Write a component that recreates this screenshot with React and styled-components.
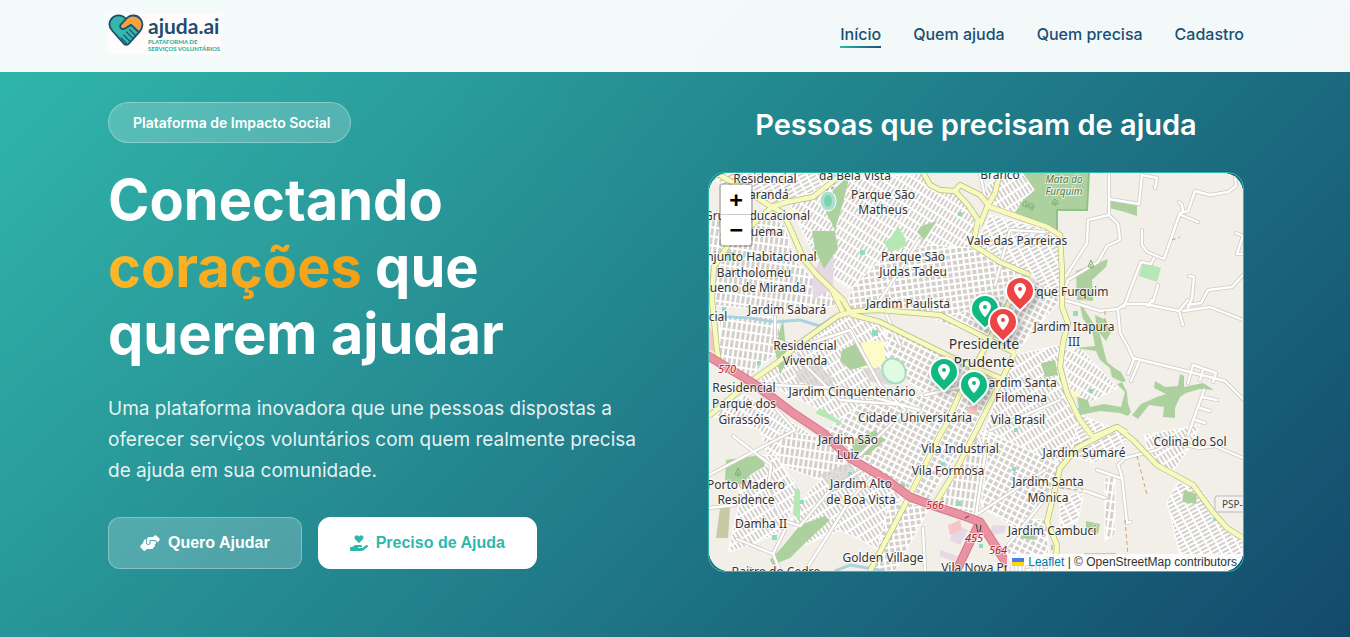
import React from "react";
import styled, { createGlobalStyle } from "styled-components";
import { FaHandshakeAngle, FaHandHoldingHeart, FaLocationDot } from "react-icons/fa6";

const GlobalStyle = createGlobalStyle`
  *, *::before, *::after { box-sizing: border-box; }
  body { margin: 0; font-family: Inter, "Liberation Sans", sans-serif; }
`;

const Page = styled.div`
  min-height: 100vh;
  color: #fff;
  background:
    radial-gradient(circle at 20% 50%, rgba(255, 255, 255, 0.02), transparent 50%),
    linear-gradient(135deg, #2fb9ac 0%, #134a6c 100%);
`;

const Container = styled.div`
  max-width: 1200px;
  margin: 0 auto;
  padding: 0 31px 0 33px;
`;

const Header = styled.header`
  padding-bottom: 4px;
  background: rgba(255, 255, 255, 0.95);
`;

const HeaderRow = styled(Container)`
  display: flex;
  align-items: center;
  justify-content: space-between;
  height: 68px;
`;

const LogoLink = styled.a`
  display: block;
  height: 40px;
  svg { display: block; }
`;

const Nav = styled.nav`
  display: flex;
  gap: 32px;
`;

const NavLink = styled.a`
  padding: 4px 0 2px;
  font-size: 16px;
  font-weight: 500;
  line-height: 20px;
  color: #1b4f72;
  text-decoration: none;
  border-bottom: 2px solid transparent;
  border-image: ${(p) => (p.$active ? "linear-gradient(90deg, #2eb8ac, #1b4f72) 1" : "none")};
`;

const Hero = styled(Container)`
  display: grid;
  grid-template-columns: repeat(2, minmax(0, 1fr));
  gap: 64px;
  padding-top: 30px;
  padding-bottom: 65px;
  @media (max-width: 900px) { grid-template-columns: minmax(0, 1fr); }
`;

const Intro = styled.section`
  display: flex;
  flex-direction: column;
  align-items: flex-start;
`;

const Badge = styled.span`
  padding: 8px 20px 8px 24px;
  border: 1px solid rgba(255, 255, 255, 0.3);
  border-radius: 50px;
  background: rgba(255, 255, 255, 0.2);
  font-size: 14px;
  font-weight: 600;
  line-height: 23px;
`;

const Title = styled.h1`
  margin: 24px 0 25px;
  font-size: 56px;
  font-weight: 700;
  line-height: 67px;
`;

const Highlight = styled.span`
  color: transparent;
  background: linear-gradient(135deg, #fdbb2d, #f39c12);
  background-clip: text;
`;

const Lead = styled.p`
  margin: 0 0 31px;
  font-size: 19px;
  line-height: 31px;
  color: rgba(255, 255, 255, 0.9);
`;

const Actions = styled.div`
  display: flex;
  flex-wrap: wrap;
  gap: 16px;
`;

const Button = styled.button`
  display: inline-flex;
  align-items: center;
  gap: 8px;
  height: 52px;
  padding: 0 31px;
  border: 1px solid ${(p) => (p.$solid ? "#fff" : "rgba(255, 255, 255, 0.3)")};
  border-radius: 12px;
  background: ${(p) => (p.$solid ? "#fff" : "rgba(255, 255, 255, 0.2)")};
  color: ${(p) => (p.$solid ? "#2eb8ac" : "#fff")};
  font-family: "Liberation Sans", Arial, sans-serif;
  font-size: 16px;
  font-weight: 600;
  cursor: pointer;
  svg { flex: none; width: ${(p) => (p.$solid ? 18 : 20)}px; height: 16px; }
`;

const MapSection = styled.section`
  display: flex;
  flex-direction: column;
`;

const MapTitle = styled.h2`
  margin: 0 0 24px;
  font-size: 29px;
  font-weight: 600;
  line-height: 46px;
  text-align: center;
`;

const MapFrame = styled.div`
  height: 400px;
  border: 1px solid #2eb8ac;
  border-radius: 16px;
`;

const MapView = styled.div`
  position: relative;
  height: 100%;
  overflow: hidden;
  border-radius: 20px;
  background: #f2efe9;
`;

const Tiles = styled.svg`
  display: block;
  width: 100%;
  height: 100%;
`;

const ZoomControl = styled.div`
  position: absolute;
  top: 10px;
  left: 10px;
  border: 2px solid rgba(0, 0, 0, 0.2);
  border-radius: 4px;
  background-clip: padding-box;
`;

const ZoomButton = styled.button`
  display: block;
  width: 30px;
  height: 30px;
  padding: 0;
  border: 0;
  border-bottom: ${(p) => (p.$last ? "0" : "1px solid #ccc")};
  border-radius: ${(p) => (p.$last ? "0 0 2px 2px" : "2px 2px 0 0")};
  background: #fff;
  color: #000;
  font: bold 22px/30px "DejaVu Sans Mono", monospace;
  cursor: pointer;
`;

const Pin = styled.div`
  position: absolute;
  left: calc(50% + ${(p) => p.$x}px);
  top: ${(p) => p.$y}px;
  width: 30px;
  height: 30px;
  margin: -15px 0 0 -15px;
  display: flex;
  align-items: center;
  justify-content: center;
  border: 2px solid #fff;
  border-radius: 50% 50% 50% 0;
  background: ${(p) => p.$color};
  box-shadow: 0 4px 8px rgba(0, 0, 0, 0.3);
  transform: rotate(-45deg);
  svg { width: 14px; height: 16px; transform: rotate(45deg); color: #fff; }
`;

const Attribution = styled.div`
  position: absolute;
  right: 0;
  bottom: 0;
  padding: 0 6px 0 5px;
  background: rgba(255, 255, 255, 0.8);
  color: #333;
  font: 12px/17px "Liberation Sans", Arial, sans-serif;
  a { color: #0078a8; text-decoration: none; }
  svg { margin-right: 4px; }
`;

const Logo = () => (
  <svg width="113" height="40" viewBox="0 0 113 40" role="img" aria-label="ajuda.ai">
    <rect width="113" height="40" fill="#fffcfb" />
    <path d="M18 5C14 .2 7 .4 3.600 4.600C.3 8.800 1.200 13.500 4.500 17L16 29.800Q18.300 32 20.600 29.800L31.500 17.800C35 13.800 35.500 8.500 32.200 4.600C28.800 .5 22 .3 18 5Z" fill="#35b8aa" />
    <path d="M18 5C22 .3 28.800 .5 32.200 4.600C35.500 8.500 35 13.500 31.500 17.200L23.500 9.800C20 12.500 16 16 12.800 13.500C12 12 13 10.500 18 5Z" fill="#f9a03a" />
    <g fill="none" stroke="#1c4f71" strokeLinecap="round" strokeLinejoin="round">
      <path d="M18 5C14 .2 7 .4 3.600 4.600C.3 8.800 1.200 13.500 4.500 17L16 29.800Q18.300 32 20.600 29.800L31.500 17.800C35 13.800 35.500 8.500 32.200 4.600C28.800 .5 22 .3 18 5L12.600 10.800C11 13.500 14 16 17 14.500L23 10.800L30.500 18" strokeWidth="1.800" />
      <path d="M21.500 15.500L27.500 21.500M18.500 18L24.500 24.200M15.800 21L21.500 27M13.200 24L18.500 29.500" strokeWidth="1.200" />
    </g>
    <text x="40" y="20" fontFamily="Lato, sans-serif" fontSize="21" fontWeight="700" fill="#1c4f71">ajuda.ai</text>
    <g fontFamily="Lato, sans-serif" fontSize="6" fontWeight="900" fill="#2fb3a4">
      <text x="40" y="30">PLATAFORMA DE</text>
      <text x="40" y="37">SERVIÇOS VOLUNTÁRIOS</text>
    </g>
  </svg>
);

const streetPatterns = [
  ["g1", 8, 5, 9], ["g2", 27, 6, 6], ["g3", -32, 4, 10], ["g4", 62, 4, 9],
  ["g5", -8, 6, 6], ["g6", 32, 4, 9],
];

const blocks = [
  ["g1", "709,215 740,225 765,215 785,225 795,260 825,290 838,305 790,312 709,305"],
  ["g4", "709,173 840,173 812,193 772,204 709,178"],
  ["g6", "790,205 848,180 925,173 932,190 900,235 850,290 820,268"],
  ["g6", "925,188 958,192 978,222 968,248 930,245 880,270 850,290 890,240"],
  ["g5", "850,290 880,260 930,245 972,248 1028,277 1020,300 978,330 935,313 848,310"],
  ["g1", "720,315 775,317 785,345 748,378 719,362"],
  ["g3", "790,350 840,315 880,323 895,355 870,380 905,410 850,425 790,395 760,380"],
  ["g2", "885,325 960,362 1000,378 975,430 928,500 860,460 825,430 860,405 925,395 890,365"],
  ["g2", "935,320 980,336 1015,354 1060,300 1040,280 1012,297"],
  ["g3", "980,195 998,173 1040,173 1028,200 1012,212 990,206"],
  ["g4", "990,215 1050,230 1060,250 1060,300 1030,275 976,245"],
  ["g3", "1015,355 1060,345 1058,370 1072,404 1090,437 1060,465 985,430 1003,380"],
  ["g2", "982,430 1060,465 1052,490 1020,530 985,510 975,480 965,470"],
  ["g1", "937,505 975,435 990,435 980,515"],
  ["g6", "1062,350 1080,348 1118,388 1090,402 1070,390"],
  ["g4", "1080,415 1118,430 1128,440 1095,463 1070,456"],
  ["g6", "709,415 745,395 780,415 820,440 770,462 760,430 730,420"],
  ["g3", "735,458 775,455 800,490 783,530 752,545 728,552 740,500"],
  ["g3", "810,490 850,455 905,497 880,550 840,530 805,545 790,520"],
  ["g1", "780,430 835,440 850,470 820,480 780,465"],
  ["g4", "1167,502 1178,482 1202,490 1220,516 1243,540 1243,571 1184,571"],
  ["g1", "1105,478 1115,476 1115,535 1105,540"],
  ["g3", "1144,435 1200,425 1188,450 1170,475 1150,460"],
  ["g4", "1060,500 1084,490 1078,520 1060,530"],
  ["g5", "890,500 930,507 895,571 872,571"],
  ["g2", "1021,519 1046,520 1050,571 1000,555"],
];

const greens = [
  "1022,172 1089,172 1087,210 1056,210 1057,234 1046,227 1013,216 1023,200 1035,190",
  "1109,199 1137,206 1137,216 1125,212 1109,208",
  "1076,271 1108,259 1106,267 1092,280 1093,301 1077,300",
  "833,190 850,175 843,203 835,230 826,212",
  "812,231 835,231 838,248 824,269 815,250",
  "917,232 921,226 937,221 924,240",
  "1079,301 1083,319 1092,330 1095,346 1075,348 1096,351 1100,360 1110,368 1112,377 1122,382 1127,392 1128,404 1131,412 1128,416 1120,413 1100,411 1080,415 1077,397 1088,400 1090,407 1104,404 1121,407 1125,392 1117,384 1126,381 1121,372 1113,367 1107,362 1103,347 1100,335 1090,318",
  "1132,415 1141,404 1157,397 1166,394 1154,388 1155,381 1165,387 1178,386 1180,374 1184,376 1184,387 1203,383 1214,390 1200,389 1186,393 1180,397 1175,408 1175,418 1163,417 1164,407 1149,405 1138,419",
  "1095,315 1106,320 1111,332 1106,341 1097,330",
  "842,350 860,342 868,365 850,370 840,360",
  "726,460 760,455 765,466 750,475 742,485 725,480",
  "784,545 800,525 825,516 830,520 805,543 790,558 773,565 770,560",
  "855,440 875,430 885,440 868,455 850,455",
  "1184,490 1197,494 1196,504 1182,502",
  "1086,521 1100,524 1098,534 1086,530",
  "1041,363 1055,360 1058,375 1045,377",
  "1025,533 1036,535 1035,540 1020,538",
];

const minorRoads = [
  "M1109,173V215L1088,220L1087,243L1066,276M1109,215L1118,224L1120,240L1107,246L1098,262L1068,280L1062,300",
  "M1109,199L1139,204L1142,175L1157,178L1155,188M1142,230V245L1147,252L1164,259L1180,213L1188,211L1195,191L1210,195L1228,192L1236,186L1235,173",
  "M1183,211L1182,205L1179,202M1181,215L1198,222M1154,258L1151,264L1141,262L1132,285L1124,307M1153,302L1158,285",
  "M1188,308L1192,298L1194,277L1189,276M1188,305L1201,303L1208,290L1232,287L1243,275M1236,233L1243,236L1237,254H1243",
  "M1062,300L1075,303L1100,311L1118,309L1125,304L1145,304L1179,311L1188,300M1148,306L1152,300M1179,311L1183,325M1183,311L1210,307L1243,320",
  "M1118,310L1120,333L1127,345L1133,358L1186,371L1225,381L1243,399M1134,359L1128,374M1139,362L1131,381",
  "M1188,383L1193,365L1216,373L1213,382M1204,390L1188,435M1217,400L1202,397M1203,370L1200,380M1200,408L1210,411M1196,420L1205,423",
  "M1125,458L1157,450L1170,442L1200,448L1215,446L1243,458M1125,458L1118,465L1122,477L1127,523L1131,522",
  "M1060,485L1088,492L1105,498M1120,478L1097,470",
  "M733,436L771,465L768,490L782,520L800,526L830,490L870,465M709,508L735,505",
  "M737,539L773,554L785,530M773,554L780,571M790,345L775,340V317",
  "M860,455L905,410L880,385L850,330L790,350L840,400L905,405",
  "M878,470L850,500L825,540L805,571M923,528L925,571M978,435L985,455L976,515",
  "M748,378L795,430L709,475M750,384L840,388L920,410M980,173L987,207M995,285L1010,230L1045,232",
  "M1000,555L1060,480M976,515L1045,470M925,395L1000,378M990,430L1060,400M900,345L880,300L920,240",
];

const yellowRoads = [
  "M709,173L720,175L753,195L772,207L783,213L792,232L803,258L817,275L843,300L850,312",
  "M772,207L787,202L813,197L837,178L843,172",
  "M772,207L752,225L730,242L714,267L712,300L717,350L720,367",
  "M709,416L720,407L750,382L777,363L800,343L838,316L855,311L880,310L940,315L980,335L1015,353",
  "M843,312L832,290M850,314L880,322L957,360L1000,378",
  "M923,172L930,185L940,190L955,191L968,205L978,220L973,245L1000,262L1030,275",
  "M955,191L960,185L980,195L990,207L1013,215L1047,227L1060,235L1062,272L1062,307L1068,323L1063,343L1060,367L1067,393L1080,420L1093,437",
  "M1000,172L995,193L987,207L980,225M1015,353L1003,377L980,423L957,468L933,507",
  "M970,372L980,357L1012,297L1025,280M985,374L960,393L947,423L940,435L910,495L880,552L870,571",
  "M1127,433L1117,427L1077,448L1060,468L1056,485L1047,522L1057,545L1055,571",
  "M1093,437L1117,427L1133,440L1157,465L1193,485L1213,512L1227,528L1243,538",
];

const motorway = "M705,354L753,383L793,413L823,433L850,458L887,480L910,497L937,507L967,517L980,522L1003,558L1012,572M980,522L970,542L956,572";

const poi = [
  [727, 252, 8], [830, 200, 8], [860, 250, 5], [905, 195, 4], [958, 212, 4], [722, 307, 4], [757, 361, 4], [872, 330, 6],
  [772, 535, 5], [848, 472, 4], [956, 501, 5], [901, 483, 4], [1012, 467, 4], [1073, 311, 5], [1078, 408, 4],
  [1089, 389, 4], [979, 544, 4], [941, 462, 4], [1014, 428, 4], [747, 567, 5], [800, 500, 4], [1213, 518, 3],
];

const labels = [
  ["Residencial", 765, 183], ["Carandá", 765, 199], ["Grupo Educacional", 757, 220], ["Esquema", 757, 236],
  ["da Bela Vista", 855, 180], ["Parque São", 883, 199], ["Matheus", 883, 214], ["Branco", 1000, 179],
  ["Vale das Parreiras", 1017, 245], ["Parque São", 913, 261], ["Judas Tadeu", 913, 276],
  ["Conjunto Habitacional", 754, 261], ["Bartholomeu", 754, 277], ["Bueno de Miranda", 754, 292],
  ["Jardim Paulista", 908, 308], ["Jardim Sabará", 787, 314], ["cial", 718, 321], ["Parque Furquim", 1063, 296],
  ["Jardim Itapura", 1074, 331], ["III", 1074, 346], ["Residencial", 805, 350], ["Vivenda", 805, 365],
  ["Residencial", 744, 392], ["Parque dos", 744, 408], ["Girassóis", 744, 424], ["Jardim Cinquentenário", 852, 396],
  ["Jardim Santa", 1021, 387], ["Filomena", 1021, 402], ["Cidade Universitária", 915, 422], ["Vila Brasil", 1018, 424],
  ["Jardim São", 848, 444], ["Luiz", 848, 459], ["Vila Industrial", 960, 453], ["Jardim Sumaré", 1084, 457],
  ["Colina do Sol", 1190, 446], ["Vila Formosa", 948, 475], ["Porto Madero", 746, 489], ["Residence", 746, 504],
  ["Jardim Alto", 861, 488], ["de Boa Vista", 861, 504], ["Jardim Santa", 1048, 486], ["Mônica", 1048, 502],
  ["Damha II", 761, 528], ["Jardim Cambuci", 1052, 535], ["Golden Village", 883, 562],
  ["Bairro do Cedro", 776, 576], ["Vila Nova Prudente", 995, 572],
];

const CityMap = () => (
  <Tiles viewBox="709 173 534 398" preserveAspectRatio="xMidYMid slice" role="img" aria-label="Mapa de Presidente Prudente">
    <defs>
      {streetPatterns.map(([id, angle, w, h]) => (
        <pattern key={id} id={id} width={w} height={h} patternUnits="userSpaceOnUse" patternTransform={`rotate(${angle})`}>
          <rect width={w} height={h} fill="#fff" />
          <rect x="1" y="1" width={w - 2} height={h - 2} fill="#d3cfca" />
        </pattern>
      ))}
    </defs>
    <rect x="709" y="173" width="534" height="398" fill="#f2efe9" />
    {blocks.map(([id, pts]) => (
      <polygon key={pts} points={pts} fill={`url(#${id})`} stroke="#fff" />
    ))}
    <path d="M820,258L834,256L833,288L813,300L812,280ZM955,525L968,530L960,545L950,540ZM992,525L1006,526L1004,533L990,535ZM940,550L958,556L955,562L940,556Z" fill="#e6d8e5" />
    <path d="M709,325L716,340V352L709,350ZM948,525L960,520L962,530L950,535ZM968,407L978,405L976,415L967,413Z" fill="#f5c6c3" />
    <path d="M858,343L884,340L885,362L872,371L856,366ZM1072,392L1080,390V396L1072,397ZM786,211L798,209L798,214L786,214Z" fill="#fdfcc9" />
    <path d="M720,508H730L728,538H716ZM1084,553H1116V556H1084Z" fill="#c8c9a5" />
    <path d="M795,372L815,362L835,380L828,387L798,382ZM862,368L880,368L893,385L870,382ZM820,475L850,462L860,478L835,492Z" fill="#d4d1cf" opacity="0.7" />
    {greens.map((pts) => <polygon key={pts} points={pts} fill="#add19e" />)}
    <path d="M1143,262L1161,268L1157,282L1139,276ZM884,243L892,236L898,226L905,238L907,246L890,252ZM795,488L800,490L800,520L793,515ZM820,408L842,422L841,425L815,413Z" fill="#b5e8b5" />
    <path d="M783,318L787,360L780,375L775,350Z" fill="#add19e" />
    <path d="M715,316L750,318L775,322L800,320L820,326L835,316M835,571L850,565L885,571" fill="none" stroke="#aad3df" strokeWidth="3" />
    <path d="M1089,172L1087,210H1057V233" fill="none" stroke="#8fc287" strokeWidth="2" />
    {poi.map(([x, y, s]) => <rect key={`${x}-${y}`} x={x} y={y} width={s} height={s} fill="#8fdcc1" />)}
    {["#cfcbc5", "#fff"].map((color, i) => (
      <g key={color} fill="none" stroke={color} strokeWidth={i ? 2.4 : 4} strokeLinejoin="round" strokeLinecap="round">
        {minorRoads.map((d) => <path key={d} d={d} />)}
      </g>
    ))}
    <path d="M1137,456L1147,495M1125,520L1128,555M1060,488L1083,490M1172,240L1180,237M1105,311V322" fill="none" stroke="#c8a46a" strokeDasharray="4 3" />
    <path d="M822,192L832,188L837,180" fill="none" stroke="#5a5aff" strokeDasharray="2 3" />
    <ellipse cx="828" cy="201" rx="8" ry="10" fill="#aae0cb" stroke="#fff" />
    <ellipse cx="828" cy="201" rx="4" ry="6" fill="#7fd2ae" />
    <ellipse cx="894" cy="371" rx="11" ry="13" transform="rotate(-35 894 371)" fill="#dffce2" stroke="#a5dfc0" strokeWidth="2" />
    {["#b9b97e", "#f7fabf"].map((color, i) => (
      <g key={color} fill="none" stroke={color} strokeWidth={i ? 4.6 : 6} strokeLinejoin="round">
        {yellowRoads.map((d) => <path key={d} d={d} />)}
      </g>
    ))}
    <g fill="none" strokeLinejoin="round">
      <path d={motorway} stroke="#dc7389" strokeWidth="9" />
      <path d={motorway} stroke="#e892a2" strokeWidth="7" />
      <path d="M965,518L969,516M976,524L978,532M981,525L980,532" stroke="#444" />
    </g>
    <g fill="none" stroke="#7cae72">
      <path d="M1026,203V208M1023,206Q1022,202 1026,201Q1030,203 1028,206ZM1032,205V211M1029,208Q1029,203 1032,203Q1035,206 1034,208ZM1055,201V206M1052,204Q1053,199 1055,199Q1058,202 1058,204ZM1091,264V269M1088,267L1091,260L1094,267ZM738,472V477M735,475L738,468L741,475ZM1052,545V550" />
    </g>
    <g fontFamily='"Noto Sans", sans-serif' fontSize="12" textAnchor="middle" fill="#333" stroke="#fff" strokeOpacity="0.7" strokeWidth="2" strokeLinejoin="round" paintOrder="stroke">
      {labels.map(([text, x, y]) => <text key={`${x}-${y}`} x={x} y={y}>{text}</text>)}
      <g fontSize="14">
        <text x="984" y="349">Presidente</text>
        <text x="984" y="367">Prudente</text>
      </g>
      <g fontSize="10" fontStyle="italic" fill="#4f7d4a">
        <text x="1064" y="183">Mata do</text>
        <text x="1064" y="195">Furquim</text>
      </g>
      <g fontSize="11" fontStyle="italic" fill="#b3202c">
        <text x="727" y="373">570</text>
        <text x="935" y="509">566</text>
        <text x="974" y="542">455</text>
        <text x="998" y="554">564</text>
      </g>
    </g>
    <rect x="1215" y="496" width="40" height="16" rx="2" fill="#f3f1ee" stroke="#bbb" />
    <text x="1222" y="508" fontFamily='"Noto Sans", sans-serif' fontSize="10" fill="#444">PSP-</text>
  </Tiles>
);

const pins = [
  { x: 44, y: 118, color: "#ef4444" },
  { x: 9, y: 136, color: "#10b981" },
  { x: 27, y: 149, color: "#ef4444" },
  { x: -32, y: 199, color: "#10b981" },
  { x: -2, y: 212, color: "#10b981" },
];

const navItems = ["Início", "Quem ajuda", "Quem precisa", "Cadastro"];

export default function App() {
  return (
    <>
      <GlobalStyle />
      <Page>
        <Header>
          <HeaderRow>
            <LogoLink href="#inicio"><Logo /></LogoLink>
            <Nav>
              {navItems.map((item, i) => (
                <NavLink key={item} href="#" $active={i === 0}>{item}</NavLink>
              ))}
            </Nav>
          </HeaderRow>
        </Header>
        <Hero as="main">
          <Intro>
            <Badge>Plataforma de Impacto Social</Badge>
            <Title>Conectando <Highlight>corações</Highlight> que querem ajudar</Title>
            <Lead>
              Uma plataforma inovadora que une pessoas dispostas a oferecer serviços
              voluntários com quem realmente precisa de ajuda em sua comunidade.
            </Lead>
            <Actions>
              <Button type="button"><FaHandshakeAngle />Quero Ajudar</Button>
              <Button type="button" $solid><FaHandHoldingHeart />Preciso de Ajuda</Button>
            </Actions>
          </Intro>
          <MapSection>
            <MapTitle>Pessoas que precisam de ajuda</MapTitle>
            <MapFrame>
              <MapView>
                <CityMap />
                {pins.map((pin) => (
                  <Pin key={`${pin.x}`} $x={pin.x} $y={pin.y} $color={pin.color}><FaLocationDot /></Pin>
                ))}
                <ZoomControl>
                  <ZoomButton type="button" aria-label="Aumentar zoom">+</ZoomButton>
                  <ZoomButton type="button" aria-label="Diminuir zoom" $last>−</ZoomButton>
                </ZoomControl>
                <Attribution>
                  <a href="https://leafletjs.com">
                    <svg width="12" height="8" viewBox="0 0 12 8" aria-hidden="true">
                      <path fill="#4c7be1" d="M0 0h12v4H0z" />
                      <path fill="#ffd500" d="M0 4h12v4H0z" />
                    </svg>
                    Leaflet
                  </a>{" "}
                  | © OpenStreetMap contributors
                </Attribution>
              </MapView>
            </MapFrame>
          </MapSection>
        </Hero>
      </Page>
    </>
  );
}
